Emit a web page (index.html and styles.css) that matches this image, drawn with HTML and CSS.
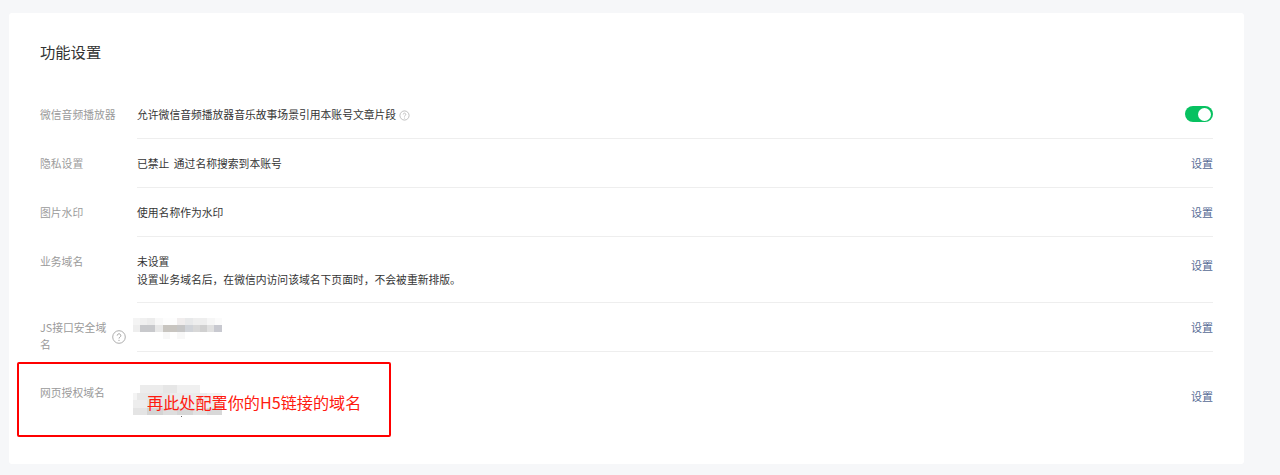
FILE: index.html
```html
<!DOCTYPE html>
<html lang="zh-CN">
<head>
<meta charset="utf-8">
<title>功能设置</title>
<link rel="stylesheet" href="styles.css">
</head>
<body>
<main class="card">
  <h2 class="title">功能设置</h2>
  <div class="rows">
    <div class="row row-audio">
      <div class="label">微信音频播放器</div>
      <div class="body">
        <span>允许微信音频播放器音乐故事场景引用本账号文章片段</span>
        <svg class="help-small" viewBox="0 0 12 12" aria-hidden="true"><circle cx="6" cy="6" r="5" fill="none" stroke="#b4b4b4" stroke-width="0.9"/><path d="M4.6 4.8a1.4 1.4 0 1 1 2.2 1.2c-.5.3-.8.6-.8 1.1" fill="none" stroke="#b4b4b4" stroke-width="0.9"/><circle cx="6" cy="8.7" r=".55" fill="#b4b4b4"/></svg>
      </div>
      <div class="action"><span class="switch"><span class="knob"></span></span></div>
    </div>
    <div class="row row-std">
      <div class="label">隐私设置</div>
      <div class="body">已禁止 通过名称搜索到本账号</div>
      <div class="action"><a class="link">设置</a></div>
    </div>
    <div class="row row-std">
      <div class="label">图片水印</div>
      <div class="body">使用名称作为水印</div>
      <div class="action"><a class="link">设置</a></div>
    </div>
    <div class="row row-tall">
      <div class="label">业务域名</div>
      <div class="body">未设置<br>设置业务域名后，在微信内访问该域名下页面时，不会被重新排版。</div>
      <div class="action"><a class="link">设置</a></div>
    </div>
    <div class="row row-js">
      <div class="label label-js">
        <span class="label-text">JS接口安全域名</span>
        <svg class="help-big" viewBox="0 0 14 14" aria-hidden="true"><circle cx="7" cy="7" r="6.3" fill="none" stroke="#999" stroke-width="0.8"/><path d="M5.2 5.6a1.8 1.8 0 1 1 2.8 1.5c-.6.4-1 .7-1 1.4" fill="none" stroke="#999" stroke-width="0.9"/><circle cx="7" cy="10.3" r=".6" fill="#999"/></svg>
      </div>
      <div class="body">
        <div class="mosaic mosaic-js"></div>
      </div>
      <div class="action"><a class="link">设置</a></div>
    </div>
    <div class="row row-last">
      <div class="label">网页授权域名</div>
      <div class="body">
        <div class="mosaic mosaic-auth"></div>
      </div>
      <div class="action"><a class="link">设置</a></div>
    </div>
  </div>
  <div class="annotation"><span class="annotation-text">再此处配置你的H5链接的域名</span></div>
</main>
</body>
</html>
```
FILE: styles.css
```css
* { box-sizing: border-box; }
html, body { margin: 0; height: 475px; overflow: hidden; }
body {
  background: #f6f7f9;
  padding: 13px 36px 11px 9px;
  font-family: "Noto Sans CJK SC", "Liberation Sans", sans-serif;
  font-size: 10.8px;
  color: #353535;
}
.card {
  position: relative;
  height: 451px;
  background: #fff;
  border-radius: 3px;
  padding: 0 31px;
}
.title {
  margin: 0;
  padding-top: 26px;
  height: 76px;
  font-size: 15.3px;
  line-height: 24px;
  font-weight: 400;
  color: #333333;
}
.row {
  display: flex;
  align-items: flex-start;
  position: relative;
}
.row::after {
  content: "";
  position: absolute;
  left: 97px;
  right: 0;
  bottom: 0;
  height: 1px;
  background: #eeeeee;
}
.row-last::after { display: none; }
.label { width: 97px; flex: none; color: #9a9a9a; line-height: 17px; }
.body { flex: 1; line-height: 17px; }
.action { flex: none; }
.link { color: #576b95; font-size: 11px; }
.row-audio { height: 50px; padding-top: 17px; }
.row-std { height: 49px; padding-top: 16px; }
.row-std .body { word-spacing: 2px; }
.row-tall { height: 66px; padding-top: 16px; }
.row-tall .body { line-height: 18px; margin-top: -1px; }
.row-tall .action { padding-top: 4px; }
.row-js { height: 49px; }
.row-last { height: 90px; }
.row-js .action { padding-top: 16px; }
.row-last .action { padding-top: 36px; }
.row-js .label { padding-top: 16px; }
.row-last .label { padding-top: 32px; }
.label-js { display: flex; align-items: center; }
.label-text { width: 68px; }
.help-big { width: 14px; height: 14px; margin: 2px 0 0 4px; flex: none; }
.help-small { width: 11px; height: 11px; vertical-align: -2px; }
.switch {
  display: block;
  width: 28px;
  height: 16px;
  border-radius: 8px;
  background: #07c160;
  position: relative;
}
.knob {
  position: absolute;
  right: 2px;
  top: 1.5px;
  width: 13px;
  height: 13px;
  border-radius: 50%;
  background: #fff;
}
.mosaic { width: 89px; background-repeat: no-repeat; filter: blur(.5px); }
.mosaic-js {
  height: 22px;
  margin: 15px 0 0 -4px;
  background-image:
    linear-gradient(90deg, #f4f4f4 0 7px, #f0f0f0 7px 14px, #ececec 14px 22px, #f8f8f8 22px 30px, #fdfdfd 30px 44px, #f0eded 44px 52px, #e8e9ea 52px 60px, #eeeeee 60px 74px, #f6f6f6 74px 82px, #fbfbfb 82px 89px),
    linear-gradient(90deg, #eeeeee 0 7px, #c8c9cc 7px 22px, #e8e8e8 22px 30px, #c8c5c0 30px 44px, #c6c6c6 44px 52px, #d0d3d8 52px 60px, #d8d8d8 60px 67px, #d0d0d0 67px 74px, #e0e0e0 74px 81px, #c8c9d0 81px 89px),
    linear-gradient(90deg, #fff 0 30px, #f8f8f8 30px 37px, #fff 37px 44px, #f8f8f8 44px 52px, #fff 52px);
  background-size: 100% 7px;
  background-position: 0 0, 0 7px, 0 14px;
}
.mosaic-auth {
  position: relative;
  height: 30px;
  margin: 33px 0 0 -4px;
  background-image:
    linear-gradient(90deg, #fff 0 7px, #ececec 7px 30px, #e6e6e6 30px 44px, #f0f0f0 44px 67px, #fff 67px),
    linear-gradient(90deg, #f4f4f4 0 4px, #e8e8e8 4px 37px, #ececec 37px 74px, #f2f2f2 74px 89px),
    linear-gradient(90deg, #ededed 0 14px, #e6e6e6 14px 44px, #eeeeee 44px 89px),
    linear-gradient(90deg, #e4e4e4 0 14px, #d4d4d4 14px 30px, #dedede 30px 44px, #d6d6d6 44px 60px, #e2e2e2 60px 74px, #d8d8d8 74px 89px);
  background-size: 100% 8px;
  background-position: 0 0, 0 7px, 0 15px, 0 23px;
}
.mosaic-auth::after {
  content: "";
  position: absolute;
  left: 48px;
  top: 31px;
  width: 1px;
  height: 1px;
  background: #666;
}
.annotation {
  position: absolute;
  left: 8px;
  top: 349px;
  width: 374px;
  height: 75px;
  border: 2px solid #ff0000;
  border-radius: 2px;
  padding: 26px 0 0 128px;
}
.annotation-text {
  color: #ff1a10;
  font-size: 16.15px;
  line-height: 24px;
  white-space: nowrap;
}
```
